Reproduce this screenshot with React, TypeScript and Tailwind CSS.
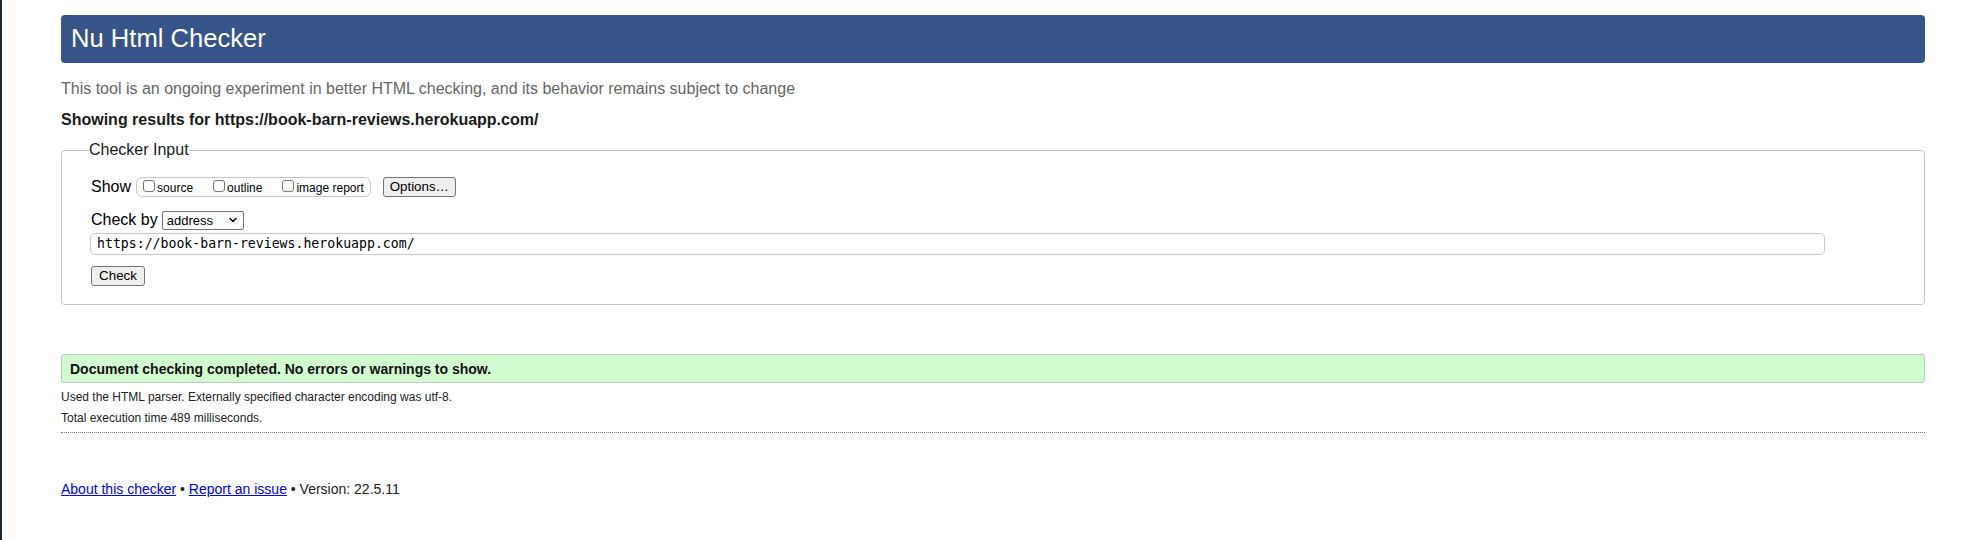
import { ChevronDown } from 'lucide-react';

function Box() {
  return (
    <span className="mb-[3px] inline-block h-[12px] w-[12px] rounded-[3px] border border-[#767676] bg-white" />
  );
}

function Btn({ label, className }: { label: string; className?: string }) {
  return (
    <span
      className={`inline-flex h-[20px] items-center justify-center rounded-[3px] border border-[#767676] bg-[#efefef] text-[13.33px] leading-none text-black ${className ?? ''}`}
    >
      {label}
    </span>
  );
}

export default function App() {
  return (
    <div className="flex min-h-[540px] w-[1978px] bg-white font-['Liberation_Sans',Arial,sans-serif] text-black">
      <div className="w-[2px] shrink-0 bg-[#1d2435]" />

      <div className="w-[1923px] pl-[59px] pt-[15px]">
        <h1 className="flex h-[48px] items-center rounded-[4px] bg-[#375489] pl-[10px] text-[25.6px] font-normal leading-none text-white">
          Nu Html Checker
        </h1>

        <p className="mt-[16px] text-[16px] leading-[20px] text-[#666]">
          This tool is an ongoing experiment in better HTML checking, and its behavior remains subject to change
        </p>

        <p className="mt-[11px] text-[16px] font-bold leading-[20px] text-[#1a1a1a]">
          Showing results for https://book-barn-reviews.herokuapp.com/
        </p>

        <fieldset className="mt-[10px] rounded-[4px] border border-[#c4c4c4] pb-[17px] pl-[27px]">
          <legend className="px-0 text-[16px] leading-[20px] text-[#1a1a1a]">Checker Input</legend>

          <div className="mt-[16px] flex h-[22px] items-center pl-[2px]">
            <span className="text-[16px] leading-none">Show</span>
            <div className="ml-[5px] flex h-[20px] items-end rounded-[6px] border border-[#c8c8c8] pb-[1px] pl-[6px] pr-[6px] text-[12px] leading-[14px]">
              <span className="flex items-end">
                <Box />
                <span className="ml-[2px]">source</span>
              </span>
              <span className="ml-[20px] flex items-end">
                <Box />
                <span className="ml-[2px]">outline</span>
              </span>
              <span className="ml-[20px] flex items-end">
                <Box />
                <span className="ml-[2px]">image report</span>
              </span>
            </div>
            <Btn label="Options…" className="ml-[12px] w-[73px]" />
          </div>

          <div className="mt-[12px] flex h-[20px] items-center pl-[2px]">
            <span className="text-[16px] leading-none">Check by</span>
            <span className="ml-[4px] flex h-[19px] w-[82px] items-center justify-between rounded-[2px] border border-[#767676] bg-white pl-[4px] pr-[4px] text-[13px] leading-none">
              address
              <ChevronDown className="h-[12px] w-[12px]" strokeWidth={3} />
            </span>
          </div>

          <div className="ml-[1px] mt-[3px] flex h-[22px] w-[1735px] items-center rounded-[5px] border border-[#c8c8c8] bg-white pl-[6px] font-['DejaVu_Sans_Mono',monospace] text-[13.2px] leading-none">
            https://book-barn-reviews.herokuapp.com/
          </div>

          <div className="mt-[8px] pl-[2px]">
            <Btn label="Check" className="w-[54px]" />
          </div>
        </fieldset>

        <div className="mt-[49px] flex h-[29px] items-center rounded-[3px] border border-[#c4c4c4] bg-[#d0fcd0] pl-[8px] text-[14px] font-bold leading-none text-[#111]">
          Document checking completed. No errors or warnings to show.
        </div>

        <p className="mt-[4px] text-[12px] leading-[21px] text-[#222]">
          Used the HTML parser. Externally specified character encoding was utf-8.
        </p>
        <p className="text-[12px] leading-[21px] text-[#222]">Total execution time 489 milliseconds.</p>

        <div className="mt-[3px] border-t border-dotted border-[#777]" />

        <p className="mt-[46px] text-[14px] leading-[20px] text-[#222]">
          <a className="text-[#0000ee] underline">About this checker</a>
          {' • '}
          <a className="text-[#0000ee] underline">Report an issue</a>
          {' • Version: 22.5.11'}
        </p>
      </div>
    </div>
  );
}
